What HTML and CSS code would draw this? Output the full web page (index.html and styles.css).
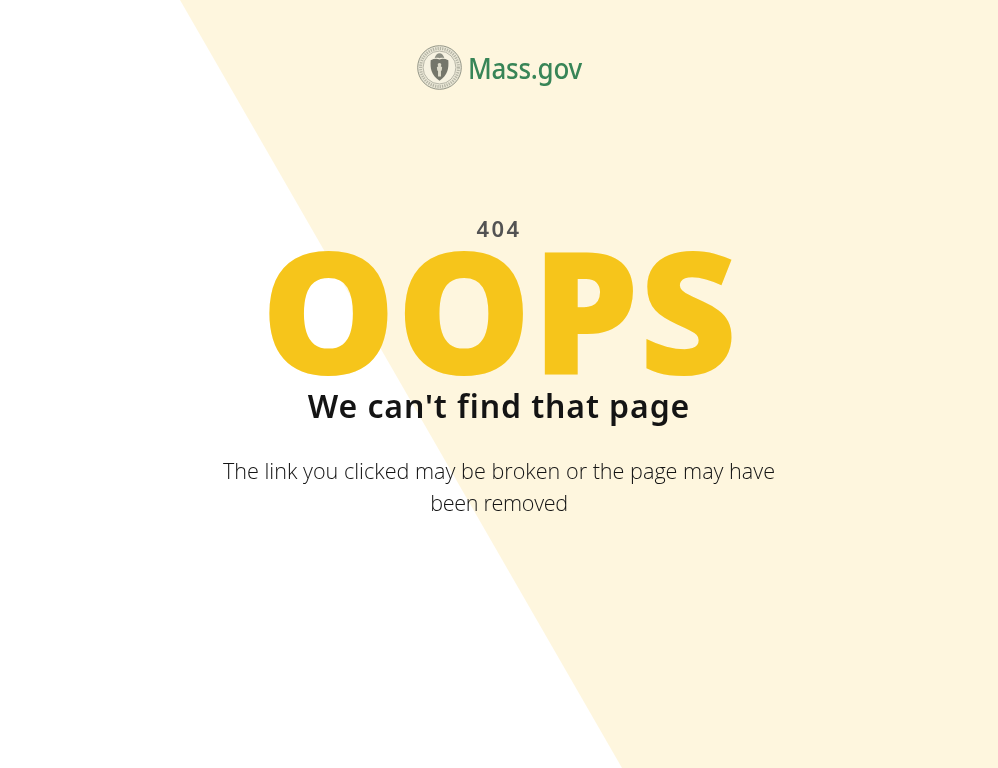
FILE: index.html
```
<!DOCTYPE html>
<html lang="en">
<head>
<meta charset="utf-8">
<title>404 | Mass.gov</title>
<link rel="stylesheet" href="styles.css">
</head>
<body>
<div class="backdrop"></div>
<main class="page">
  <header class="brand">
    <svg class="seal" viewBox="0 0 46 46" aria-hidden="true">
      <circle cx="23" cy="23" r="22.300" fill="#ece9d8" stroke="#8f9183" stroke-width="1"/>
      <circle cx="23" cy="23" r="19.400" fill="none" stroke="#b5b5a6" stroke-width="3" stroke-dasharray="1.300 1.100"/>
      <circle cx="23" cy="23" r="16.800" fill="#f6f2e1" stroke="#8b8d80" stroke-width=".6"/>
      <path d="M14 15.500c3.300-1.500 6.300-1.700 9-.8 2.700-.9 5.700-.7 9 .8 .6 8-.3 15-9 21-8.700-6-9.600-13-9-21z" fill="#74766b"/>
      <path d="M23 8.500c-2.300 0-4 1.500-5 5 1.800-.6 3.500-.5 5 0 1.500-.5 3.200-.6 5 0-1-3.500-2.700-5-5-5z" fill="#8d8f83"/>
      <path d="M23 18.500c1.200 0 1.800.8 1.800 1.800 0 .6-.2 1.100-.5 1.400l1.400 1.100-.4 3-.8 1v5.500h-3v-5.500l-.8-1-.4-3 1.400-1.100c-.3-.3-.5-.8-.5-1.400 0-1 .6-1.800 1.800-1.800z" fill="#dedccb"/>
    </svg>
    <span class="wordmark">Mass.gov</span>
  </header>
  <section class="message">
    <p class="code">404</p>
    <h1 class="oops">OOPS</h1>
    <h2 class="title">We can't find that page</h2>
    <p class="detail">The link you clicked may be broken or the page may have <span class="detail-end">been removed</span></p>
  </section>
</main>
</body>
</html>
```
FILE: styles.css
```
* { box-sizing: border-box; }
html, body { margin: 0; padding: 0; height: 100%; }
body {
  background: #fff;
  font-family: "Open Sans", sans-serif;
  overflow: hidden;
}
.backdrop {
  position: fixed;
  inset: 0;
  background: #fef6de;
  clip-path: polygon(180px 0, 100% 0, 100% 100%, 622px 100%);
}
.page {
  position: relative;
  display: flex;
  flex-direction: column;
  align-items: center;
  padding-top: 45px;
}
.brand {
  display: flex;
  align-items: center;
  gap: 6px;
  height: 45px;
}
.seal { width: 45px; height: 45px; display: block; filter: blur(.5px); }
.wordmark {
  font-family: "Noto Sans", sans-serif;
  font-size: 28px;
  font-weight: 500;
  letter-spacing: -.3px;
  color: #388557;
  line-height: 45px;
  margin: 2px -9px 0 0;
  transform: scaleX(.927);
  transform-origin: left center;
  filter: blur(.3px);
}
.message {
  display: flex;
  flex-direction: column;
  align-items: center;
  width: 570px;
  margin-top: 124px;
  text-align: center;
}
.code {
  margin: 0;
  font-family: "Noto Sans", sans-serif;
  font-size: 22px;
  font-weight: 600;
  letter-spacing: 2.400px;
  line-height: 28px;
  color: #535353;
}
.oops {
  margin: 0 0 10px;
  font-size: 170px;
  font-weight: 800;
  line-height: 132px;
  color: #f6c51b;
}
.title {
  margin: 0;
  font-family: "Noto Sans", sans-serif;
  font-size: 32px;
  font-weight: 600;
  letter-spacing: .9px;
  line-height: 44px;
  color: #141414;
}
.detail {
  margin: 27px 0 0;
  font-size: 21.600px;
  font-weight: 300;
  line-height: 32px;
  color: #141414;
}
.detail-end { letter-spacing: -.33px; }
```
